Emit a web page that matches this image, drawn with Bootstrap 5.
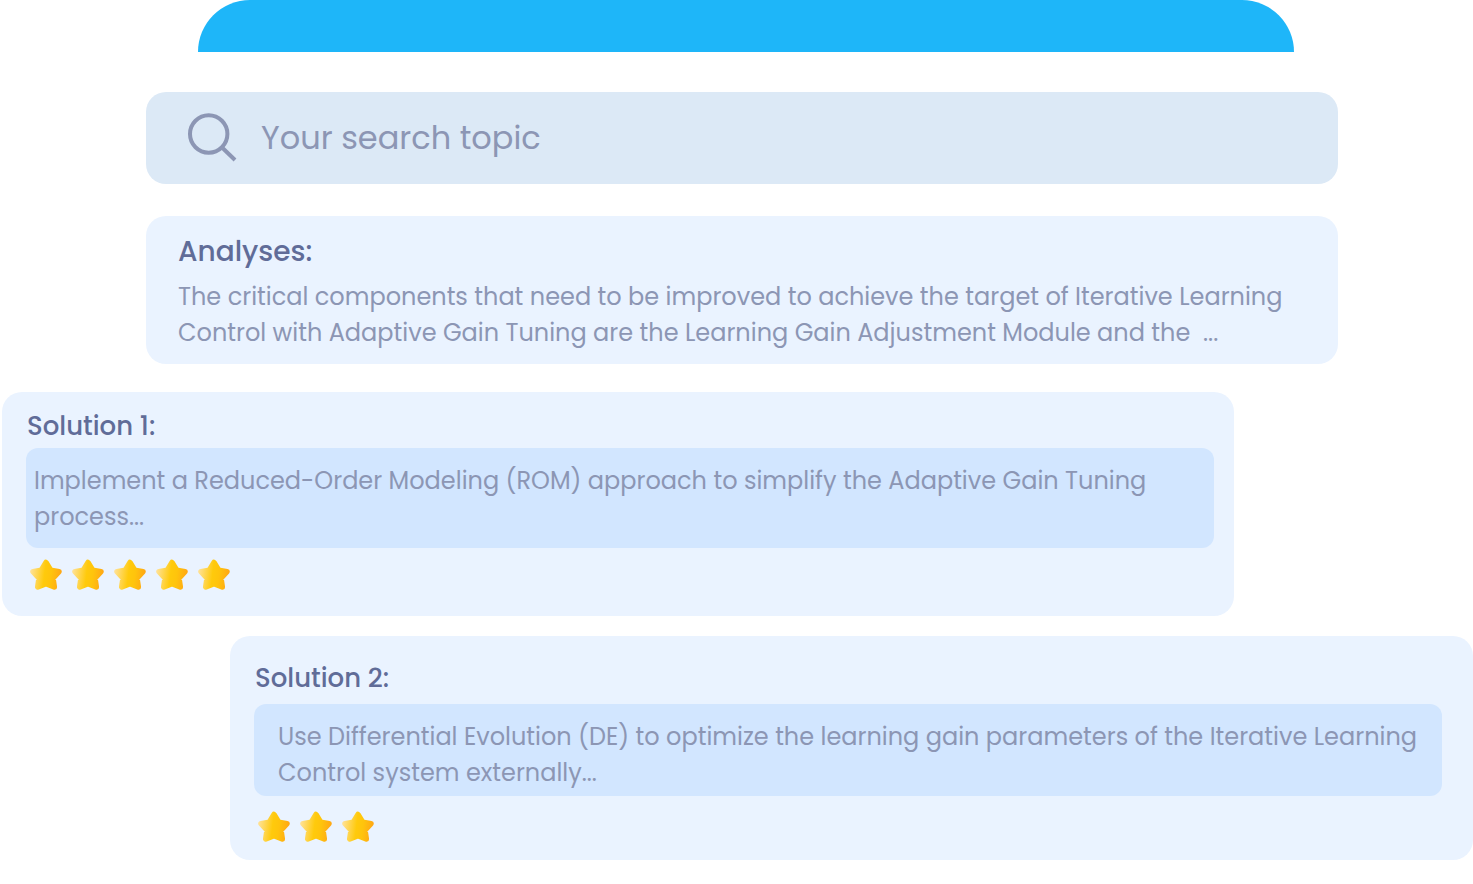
<!DOCTYPE html>
<html lang="en">
<head>
<meta charset="utf-8">
<meta name="viewport" content="width=device-width, initial-scale=1">
<title>Search topic solutions</title>
<link href="https://cdn.jsdelivr.net/npm/bootstrap@5.3.0/dist/css/bootstrap.min.css" rel="stylesheet">
<style>
  body { font-family: Poppins, Inter, sans-serif; background: #fff; color: #8c96b4; font-size: 24px; line-height: 36px; overflow-x: hidden; }
  .top-bar { height: 52px; margin: 0 179px 40px 198px; background: #1eb6f9; border-radius: 52px 52px 0 0; }
  .center-column { margin: 0 135px 28px 146px; }
  .search-box { height: 92px; padding: 0 40px; gap: 23px; background: #dce9f6; border-radius: 20px; margin-bottom: 32px; }
  .search-box input, .search-box input:focus { font-size: 32px; line-height: 48px; color: #8c96b4; background: transparent; box-shadow: none; }
  .search-box input::placeholder { color: #8c96b4; opacity: 1; }
  .panel { background: #eaf3ff; border-radius: 20px; }
  .panel h2 { color: #606c98; font-weight: 500; margin: 0; }
  .analysis { padding: 16px 32px 13px; }
  .analysis h2 { font-size: 28px; line-height: 40px; margin-bottom: 7px; }
  .solution { padding: 16px 20px 24px 24px; }
  .solution h2 { font-size: 26px; line-height: 36px; padding-left: 1px; margin-bottom: 4px; }
  .solution-first { margin: 0 239px 20px 2px; }
  .solution-second { margin-left: 230px; padding-top: 24px; padding-bottom: 16px; padding-right: 31px; }
  .solution-second h2 { margin-bottom: 8px; }
  .idea { background: #d2e6ff; border-radius: 12px; padding: 15px 8px 13px; margin-bottom: 11px; }
  .solution-second .idea { padding: 15px 24px 5px; margin-bottom: 15px; }
  .stars { gap: 10px; padding-left: 4px; height: 33px; }
</style>
</head>
<body>
<svg width="0" height="0" class="position-absolute" aria-hidden="true">
  <defs>
    <linearGradient id="gold" gradientUnits="userSpaceOnUse" x1="0" y1="14" x2="32" y2="18">
      <stop offset="0" stop-color="#ffe29a"/><stop offset=".45" stop-color="#ffca0c"/><stop offset=".65" stop-color="#ffc40c"/><stop offset="1" stop-color="#ffa416"/>
    </linearGradient>
    <symbol id="star" viewBox="0 0 32 32">
      <path d="M16 3.500 20.700 11.200 29 12.600 23 19.200 24.300 28 16 24.600 7.700 28 9 19.200 3 12.600 11.300 11.200Z" fill="url(#gold)" stroke="url(#gold)" stroke-width="5.500" stroke-linejoin="round"/>
    </symbol>
  </defs>
</svg>
<header class="top-bar"></header>
<main>
  <div class="center-column">
    <form class="search-box d-flex align-items-center" role="search">
      <label for="topic" class="d-flex" aria-label="Search topic">
        <svg width="52" height="52" viewBox="0 0 52 52" fill="none" stroke="#8c96b4" stroke-width="4"><circle cx="22.700" cy="22" r="18.700"/><path d="M35 34.500 49 48"/></svg>
      </label>
      <input id="topic" type="text" class="form-control border-0 p-0" placeholder="Your search topic">
    </form>
    <section class="panel analysis">
      <h2>Analyses:</h2>
      <p class="mb-0">The critical components that need to be improved to achieve the target of Iterative Learning Control with Adaptive Gain Tuning are the Learning Gain Adjustment Module and the&nbsp; ...</p>
    </section>
  </div>
  <section class="panel solution solution-first">
    <h2>Solution 1:</h2>
    <p class="idea">Implement a Reduced-Order Modeling (ROM) approach to simplify the Adaptive Gain Tuning process...</p>
    <div class="stars d-flex" role="img" aria-label="5 stars">
      <svg width="32" height="32"><use href="#star"/></svg><svg width="32" height="32"><use href="#star"/></svg><svg width="32" height="32"><use href="#star"/></svg><svg width="32" height="32"><use href="#star"/></svg><svg width="32" height="32"><use href="#star"/></svg>
    </div>
  </section>
  <section class="panel solution solution-second">
    <h2>Solution 2:</h2>
    <p class="idea">Use Differential Evolution (DE) to optimize the learning gain parameters of the Iterative Learning Control system externally...</p>
    <div class="stars d-flex" role="img" aria-label="3 stars">
      <svg width="32" height="32"><use href="#star"/></svg><svg width="32" height="32"><use href="#star"/></svg><svg width="32" height="32"><use href="#star"/></svg>
    </div>
  </section>
</main>
<script src="https://cdn.jsdelivr.net/npm/bootstrap@5.3.0/dist/js/bootstrap.bundle.min.js"></script>
</body>
</html>
